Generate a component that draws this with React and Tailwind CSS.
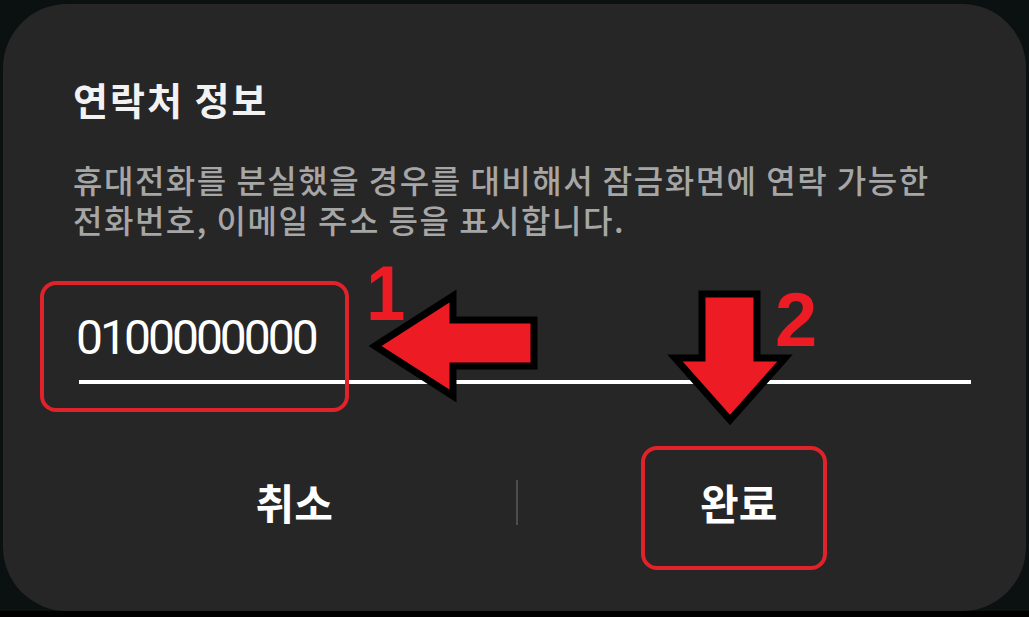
import React from 'react'

// red callout arrows drawn over the dialog
const Arrows = () => (
    <svg className="absolute inset-0 pointer-events-none" width="1023" height="607" viewBox="3 4 1023 607">
        <polygon
            points="375,346 453,296 453,320 534,320 534,366 453,366 453,396"
            fill="#ed1c24"
            stroke="#000"
            strokeWidth="7"
            strokeLinejoin="miter"
        />
        <polygon
            points="702,294 757,294 757,358 785,358 730,420 675,358 702,358"
            fill="#ed1c24"
            stroke="#000"
            strokeWidth="7"
            strokeLinejoin="miter"
        />
    </svg>
)

const App = () => {
    return (
        <div className="w-[1029px] h-[617px] bg-[#0b1010] flex flex-col overflow-hidden" style={{ fontFamily: '"Noto Sans CJK KR", "Noto Sans", sans-serif' }}>
            <div className="relative ml-[3px] mt-[4px] w-[1023px] h-[607px] rounded-[64px] bg-[#262626] flex flex-col pl-[70px] pr-[55px] pt-[72px]">
                <h2 className="text-[38px] leading-[46px] font-bold text-[#f2f2f2] tracking-[2px]">
                    연락처 정보
                </h2>
                <div className="mt-[37px] flex flex-col text-[32px] leading-[40px] font-medium text-[#a6a6a6] tracking-[1.5px]">
                    <p>휴대전화를 분실했을 경우를 대비해서 잠금화면에 연락 가능한</p>
                    <p>전화번호, 이메일 주소 등을 표시합니다.</p>
                </div>
                <div className="mt-[71px] ml-[3px] flex flex-col">
                    <div className="h-[56px] leading-[56px] text-[48px] text-white tracking-[-3px]" style={{ fontFamily: 'Roboto, sans-serif' }}>
                        0100000000
                    </div>
                    <div className="mt-[14px] h-[4px] bg-white ml-[3px]" />
                </div>
                <div className="mt-[94px] mr-[11px] flex items-center">
                    <button type="button" className="flex-1 text-[42px] font-bold text-white leading-[48px]">
                        취소
                    </button>
                    <div className="w-[2px] h-[45px] bg-[#4d4d4d]" />
                    <button type="button" className="flex-1 text-[42px] font-bold text-white leading-[48px]">
                        완료
                    </button>
                </div>

                {/* annotation frames */}
                <div className="absolute left-[37px] top-[277px] w-[309px] h-[131px] rounded-[16px] border-[4px] border-[#e0222b]" />
                <div className="absolute left-[638px] top-[442px] w-[186px] h-[124px] rounded-[16px] border-[4px] border-[#e0222b]" />
                <Arrows />
                <span className="absolute left-[361px] top-[250px] text-[78px] leading-[78px] font-bold text-[#ed1c24] scale-x-90" style={{ fontFamily: '"Liberation Sans", sans-serif' }}>1</span>
                <span className="absolute left-[772px] top-[278px] text-[76px] leading-[76px] font-bold text-[#ed1c24]" style={{ fontFamily: '"Liberation Sans", sans-serif' }}>2</span>
            </div>
            <div className="h-[6px] bg-black" />
        </div>
    )
}

export default App
